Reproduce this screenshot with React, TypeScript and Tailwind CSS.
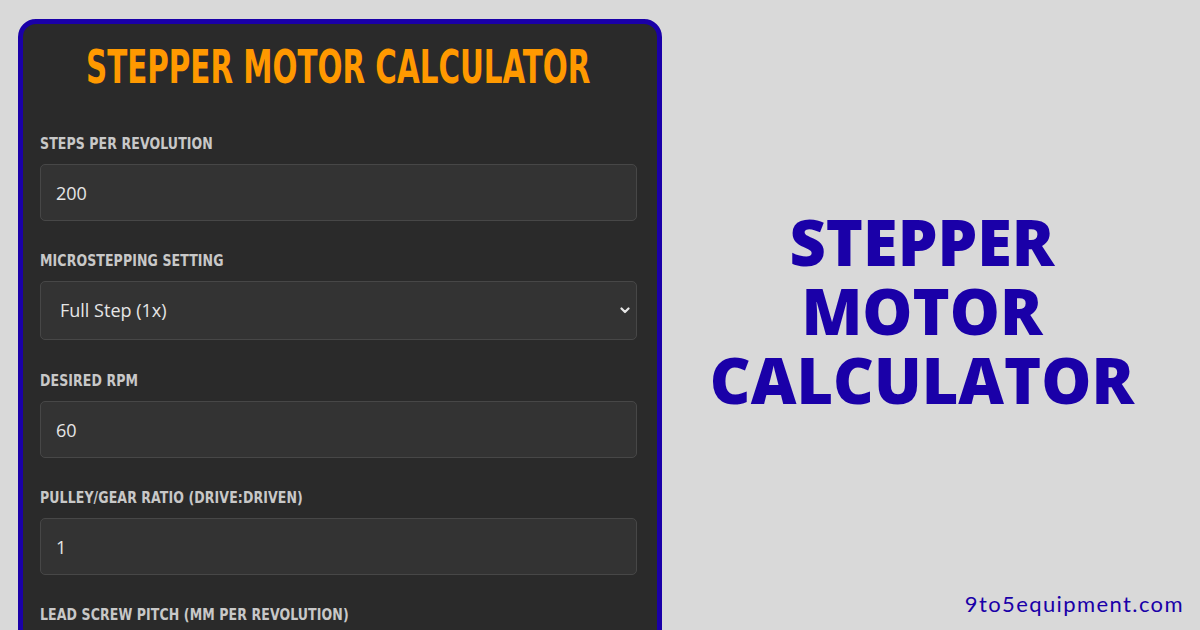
import React from "react";

const labelCls =
  "block origin-left scale-x-[0.93] h-[20px] leading-[20px] text-[15px] font-bold tracking-[0.1px] text-[#c8c8c8] uppercase mb-[10px] whitespace-nowrap";
const labelFont = { fontFamily: '"Liberation Sans Narrow", "DejaVu Sans Condensed", "Roboto", sans-serif' };
const inputCls =
  "w-full h-[57px] rounded-[5px] border border-[#474747] bg-[#333333] px-[15px] text-[18px] text-[#e6e6e6] outline-none";
const inputFont = { fontFamily: '"Open Sans", "Noto Sans", sans-serif' };

function Field({ label, value, gap = "mb-[30px]" }: { label: string; value: string; gap?: string }) {
  return (
    <div className={gap}>
      <label className={labelCls} style={labelFont}>{label}</label>
      <input className={inputCls} style={inputFont} defaultValue={value} readOnly />
    </div>
  );
}

export default function App() {
  return (
    <div className="w-[1200px] h-[630px] overflow-hidden bg-[#d9d9d9] flex">
      <div className="pl-[18px] pt-[19px]">
        <div className="w-[644px] h-[700px] rounded-[18px] border-[5px] border-[#1a00a8] bg-[#2a2a2a] pl-[17px] pr-[20px] pt-[17px]">
          <h1
            className="flex justify-center text-[46px] leading-[52px] font-bold text-[#ff9900] mb-[41px] whitespace-nowrap"
            style={{ fontFamily: '"Liberation Sans Narrow", "DejaVu Sans Condensed", sans-serif' }}
          >
            <span className="inline-block shrink-0 scale-x-[0.71]">STEPPER MOTOR CALCULATOR</span>
          </h1>
          <Field label="Steps per Revolution" value="200" />
          <div className="mb-[31px]">
            <label className={labelCls} style={labelFont}>Microstepping Setting</label>
            <div className="relative">
              <select
                className="w-full h-[59px] appearance-none rounded-[5px] border border-[#474747] bg-[#333333] pl-[19px] pr-[30px] text-[18px] text-[#e6e6e6] outline-none"
                style={inputFont}
                defaultValue="1"
              >
                <option value="1">Full Step (1x)</option>
                <option value="2">Half Step (2x)</option>
              </select>
              <svg
                className="absolute right-[7px] top-[26px] pointer-events-none"
                width="10"
                height="7"
                viewBox="0 0 10 7"
                fill="none"
              >
                <path d="M1.5 1.5 L5 5 L8.5 1.5" stroke="#e6e6e6" strokeWidth="2.2" strokeLinecap="round" strokeLinejoin="round" />
              </svg>
            </div>
          </div>
          <Field label="Desired RPM" value="60" gap="mb-[30px]" />
          <Field label="Pulley/Gear Ratio (Drive:Driven)" value="1" />
          <Field label="Lead Screw Pitch (mm per revolution)" value="8" />
        </div>
      </div>
      <div className="flex-1 flex flex-col pr-[16px]">
        <div
          className="mt-[207px] pr-[2px] text-center text-[63px] leading-[69px] font-extrabold text-[#1a00a8]"
          style={{ fontFamily: '"Open Sans", Lato, sans-serif' }}
        >
          <div>STEPPER</div>
          <div>MOTOR</div>
          <div>CALCULATOR</div>
        </div>
        <div
          className="mt-auto mb-[13px] text-right text-[22px] leading-[26px] tracking-[1.4px] text-[#1a00a8]"
          style={{ fontFamily: 'Lato, "Open Sans", sans-serif' }}
        >
          9to5equipment.com
        </div>
      </div>
    </div>
  );
}
